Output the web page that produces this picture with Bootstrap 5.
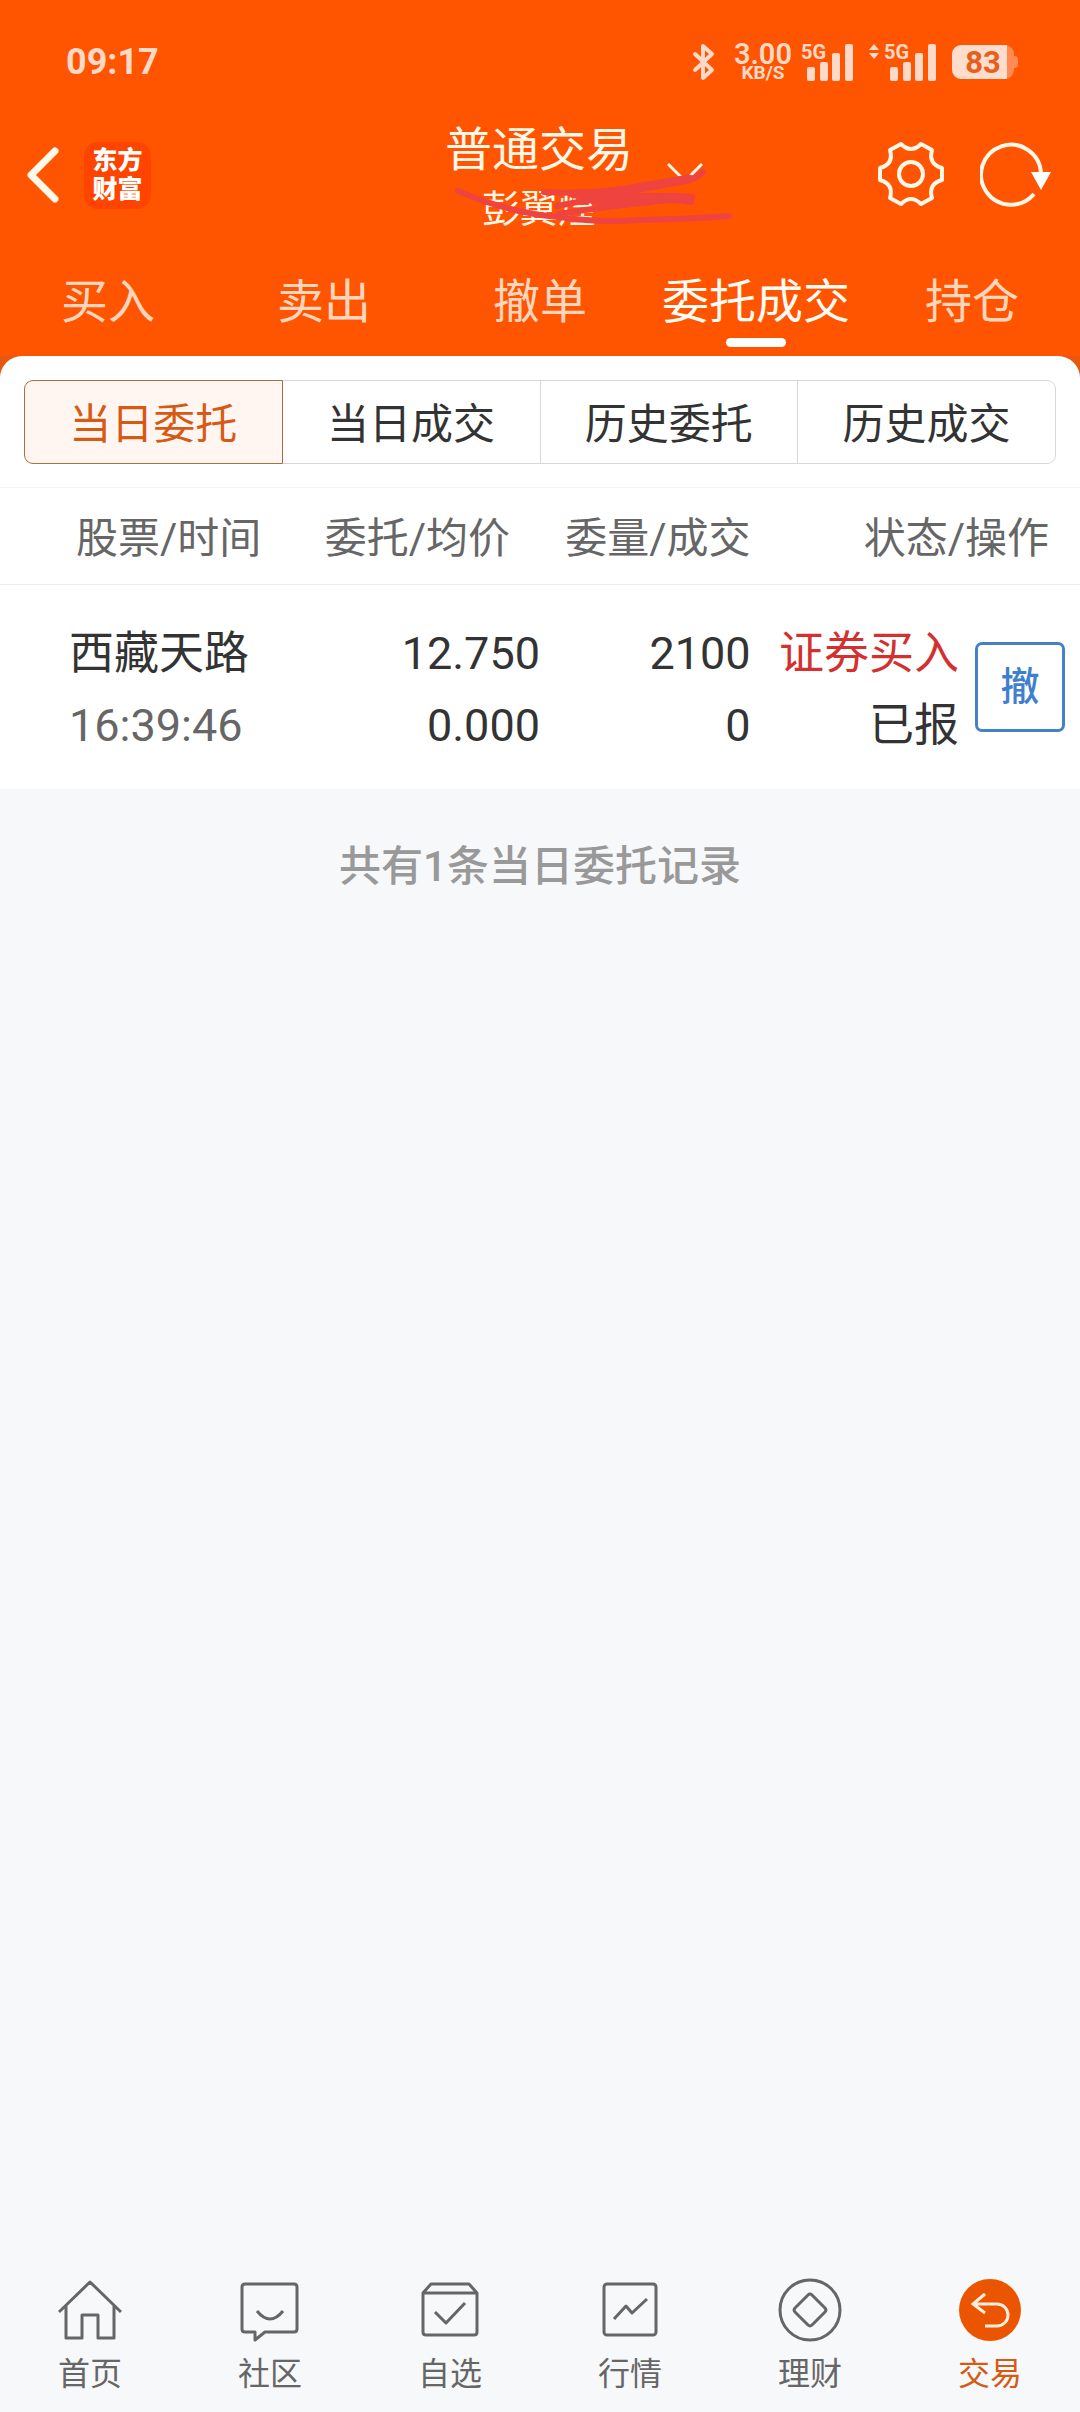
<!DOCTYPE html>
<html lang="zh-CN" data-bs-theme="light">
<head>
<meta charset="utf-8">
<meta name="viewport" content="width=device-width, initial-scale=1">
<title>普通交易</title>
<link href="https://cdn.jsdelivr.net/npm/bootstrap@5.3.0/dist/css/bootstrap.min.css" rel="stylesheet">
<style>
  body { background: #f7f8fa; color: #333; font-family: Roboto, "Noto Sans CJK SC", sans-serif; font-size: 42px; line-height: 60px; }
  .app-header { background: #ff5500; color: #fff8e8; }
  .app-header a, .app-header button { color: inherit; }

  /* status bar */
  .status-bar { height: 112px; padding: 12px 62px 0 66px; color: #ffd9c7; font-weight: 600; }
  .status-bar svg { overflow: visible; }
  .clock { font-size: 36px; font-weight: 700; }
  .net-speed { font-size: 29px; line-height: 22px; width: 58px; margin: 0 9px 0 19px; }
  .net-speed small { font-size: 19px; line-height: 16px; font-weight: 700; }

  /* title row */
  .title-bar { display: grid; grid-template-columns: 1fr auto 1fr; height: 126px; padding: 0 28px 0 26px; }
  .app-logo { width: 67px; height: 67px; border-radius: 14px; background: #ff4400; color: #fff; font-size: 25px; line-height: 29px; font-weight: 900; margin-left: 24px; }
  .account { padding-top: 8px; }
  .account-name { font-size: 47px; line-height: 60px; }
  .account-owner { font-size: 38px; line-height: 58px; }
  .scribble { left: 4px; top: 53px; pointer-events: none; }
  .chevron { margin: 0 0 4px 34px; }
  .tools { gap: 34px; }

  /* trade tabs */
  .trade-tabs .nav-link { padding: 34px 0 9px; font-size: 47px; line-height: 60px; color: #ffd6bd; border-radius: 0; }
  .trade-tabs .nav-link::after { content: ""; display: block; width: 60px; height: 9px; margin: 6px auto 0; border-radius: 5px; }
  .trade-tabs .nav-link.active { color: #fffcf5; background: none; }
  .trade-tabs .nav-link.active::after { background: #fff; }

  /* order panel */
  .panel-back { background: #e5580d; }
  .panel { border-radius: 22px 22px 0 0; }
  .seg { padding: 24px 24px 23px; }
  .seg .btn { --bs-btn-color: #333; --bs-btn-border-color: #d5d7d9; --bs-btn-font-size: 42px; --bs-btn-line-height: 60px; --bs-btn-border-radius: 9px; padding: 14px 0 8px;
    --bs-btn-active-bg: #fff6f2; --bs-btn-active-color: #d65a14; --bs-btn-active-border-color: #b06c45; }
  .orders { --bs-table-color: #333; --bs-table-bg: transparent; table-layout: fixed; border-top: 1px solid #f4f4f5; }
  .orders > :not(caption) > * > * { border: 0; }
  .orders th, .orders td { padding: 0; }
  .orders thead tr { border-bottom: 1px solid #ececee; }
  .orders thead th { color: #666; font-weight: 400; padding-top: 21px; padding-bottom: 15px; }
  .orders tbody td { font-size: 45px; line-height: 72px; padding-top: 33px; padding-bottom: 27px; white-space: nowrap; }
  .orders .head-stock { padding-left: 76px; }
  .orders .head-price { padding-right: 30px; }
  .orders .head-state { padding-right: 31px; }
  .orders .cell-stock { padding-left: 69px; }
  .orders tbody .cell-action { padding: 0 15px 0 0; }
  .orders .muted-time { color: #666; }
  .orders .buy { color: #d3302f; }
  .btn-cancel { width: 90px; height: 90px; border: 3px solid #4482c8; border-radius: 7px; color: #3f7fcf; font-size: 39px; line-height: 60px; font-weight: 500; }
  .record-count { color: #999; font-weight: 500; padding-top: 48px; }

  /* bottom navigation */
  .bottom-nav a { color: #666; font-size: 32px; line-height: 44px; gap: 10px; padding-bottom: 16px; }
  .bottom-nav a.current { color: #d65a14; }
  .line-icon { fill: none; stroke: currentColor; stroke-width: 3; stroke-linejoin: round; }
</style>
<script src="https://cdn.jsdelivr.net/npm/bootstrap@5.3.0/dist/js/bootstrap.bundle.min.js"></script>
</head>
<body class="d-flex flex-column min-vh-100">

<header class="app-header">
  <div class="status-bar d-flex align-items-center">
    <span class="clock me-auto">09:17</span>
    <svg width="22" height="38" viewBox="0 0 22 38" fill="none" stroke="currentColor" stroke-width="4" stroke-linejoin="round" stroke-linecap="round"><path d="M2 11 19 27 10 35V3L19 11 2 27"/></svg>
    <div class="net-speed text-center">3.00<small class="d-block">KB/S</small></div>
    <svg width="52" height="38" viewBox="0 0 52 38" fill="currentColor"><text x="0" y="16" font-size="20" font-weight="700">5G</text><rect x="6" y="24" width="8" height="14" rx="2"/><rect x="19" y="19" width="8" height="19" rx="2"/><rect x="31" y="10" width="8" height="28" rx="2"/><rect x="44" y="1" width="8" height="37" rx="2"/></svg>
    <svg class="ms-3" width="67" height="38" viewBox="0 0 67 38" fill="currentColor"><path d="M0 7 5 1l5 6zM0 10h10l-5 6z"/><text x="15" y="16" font-size="20" font-weight="700">5G</text><rect x="21" y="24" width="8" height="14" rx="2"/><rect x="34" y="19" width="8" height="19" rx="2"/><rect x="46" y="10" width="8" height="28" rx="2"/><rect x="59" y="1" width="8" height="37" rx="2"/></svg>
    <svg class="ms-3" width="66" height="34" viewBox="0 0 66 34"><path d="M9 0H53a9 9 0 0 1 9 9v2q4 0 4 3v6q0 3-4 3v2a9 9 0 0 1-9 9H9z" fill="#ff8a52"/><path d="M9 0H55V34H9a9 9 0 0 1-9-9V9a9 9 0 0 1 9-9z" fill="#ffdccb"/><text x="31" y="28" text-anchor="middle" font-size="31" font-weight="700" fill="#e5601c">83</text></svg>
  </div>

  <div class="title-bar align-items-center">
    <div class="d-flex align-items-center">
      <button type="button" class="btn p-0 border-0 d-flex" aria-label="返回"><svg width="34" height="58" viewBox="0 0 34 58" fill="none" stroke="currentColor" stroke-width="7" stroke-linecap="round" stroke-linejoin="round"><path d="M29 5 5 29 29 53"/></svg></button>
      <a href="#" class="app-logo d-flex flex-column justify-content-center text-center text-decoration-none text-white"><span>东方</span><span>财富</span></a>
    </div>
    <div class="account text-center position-relative">
      <div class="account-name">普通交易</div>
      <div class="account-owner">彭翼煌</div>
      <svg class="scribble position-absolute z-1" width="290" height="65" viewBox="0 0 290 65" fill="none" stroke="#ef4340" stroke-width="6" stroke-linecap="round" stroke-linejoin="round">
        <path d="M9 26Q60 48 110 52 150 58 190 55 240 54 280 51"/>
        <path d="M95 27Q150 30 190 21 225 17 246 13L254 7"/>
        <path d="M125 29Q160 29 195 22L240 14" stroke-width="9"/>
        <path d="M108 41Q150 32 190 31T243 32L242 37Q220 33 195 38 160 41 110 49"/>
        <path d="M145 36Q190 33 238 33" stroke-width="8"/>
      </svg>
    </div>
    <div class="d-flex align-items-center justify-content-between">
      <button type="button" class="btn p-0 border-0 d-flex chevron" aria-label="切换账户"><svg width="36" height="22" viewBox="0 0 36 22" fill="none" stroke="currentColor" stroke-width="3"><path d="M1 2 18 19 35 2"/></svg></button>
      <div class="tools d-flex align-items-center">
        <button type="button" class="btn p-0 border-0 d-flex" aria-label="设置"><svg width="68" height="68" viewBox="-33 -33 68 68" fill="none" stroke="currentColor" stroke-width="4" stroke-linejoin="round"><path d="M31-6V6Q17 10 21 24L10 30Q0 20-10 30L-21 24Q-17 10-31 6V-6Q-17-10-21-24L-10-30Q0-20 10-30L21-24Q17-10 31-6Z"/><circle r="12"/></svg></button>
        <button type="button" class="btn p-0 border-0 d-flex" aria-label="刷新"><svg width="72" height="68" viewBox="0 0 72 68" fill="none" stroke="currentColor" stroke-width="4"><path d="M61 32A30 30 0 1 0 54 53"/><path d="M51 31h20L61 49z" fill="#fff" stroke="none"/></svg></button>
      </div>
    </div>
  </div>

  <nav class="trade-tabs nav nav-pills nav-justified flex-nowrap">
    <a class="nav-link w-100" href="#">买入</a>
    <a class="nav-link w-100" href="#">卖出</a>
    <a class="nav-link w-100" href="#">撤单</a>
    <a class="nav-link w-100 active" aria-current="page" href="#">委托成交</a>
    <a class="nav-link w-100" href="#">持仓</a>
  </nav>
</header>

<main>
  <div class="panel-back">
    <section class="panel bg-white">
      <div class="seg">
        <div class="btn-group w-100" role="group" aria-label="委托类型">
          <button type="button" class="btn w-100 active" aria-pressed="true">当日委托</button>
          <button type="button" class="btn w-100">当日成交</button>
          <button type="button" class="btn w-100">历史委托</button>
          <button type="button" class="btn w-100">历史成交</button>
        </div>
      </div>
      <table class="table orders mb-0">
        <colgroup><col style="width:27.800%"><col style="width:22.200%"><col style="width:19.500%"><col style="width:19.300%"><col></colgroup>
        <thead>
          <tr>
            <th scope="col" class="head-stock">股票/时间</th>
            <th scope="col" class="head-price text-end">委托/均价</th>
            <th scope="col" class="text-end">委量/成交</th>
            <th scope="col" colspan="2" class="head-state text-end">状态/操作</th>
          </tr>
        </thead>
        <tbody>
          <tr>
            <td class="cell-stock">西藏天路<div class="muted-time">16:39:46</div></td>
            <td class="text-end">12.750<div>0.000</div></td>
            <td class="text-end">2100<div>0</div></td>
            <td class="text-end"><span class="buy">证券买入</span><div>已报</div></td>
            <td class="cell-action align-middle"><button type="button" class="btn btn-cancel d-block ms-auto p-0">撤</button></td>
          </tr>
        </tbody>
      </table>
    </section>
  </div>
  <p class="record-count text-center mb-0">共有1条当日委托记录</p>
</main>

<nav class="bottom-nav d-flex mt-auto">
  <a href="#" class="w-100 d-flex flex-column align-items-center text-decoration-none"><svg class="line-icon" width="64" height="64"><path d="M1 34 32 4 63 34M8 28V60H24V37H40V60H56V28"/></svg>首页</a>
  <a href="#" class="w-100 d-flex flex-column align-items-center text-decoration-none"><svg class="line-icon" width="64" height="64"><path d="M7 6H56q3 0 3 3V51q0 3-3 3H27L17 62V54H7q-3 0-3-3V9q0-3 3-3zM19 33q13 16 26 0"/></svg>社区</a>
  <a href="#" class="w-100 d-flex flex-column align-items-center text-decoration-none"><svg class="line-icon" width="64" height="64"><path d="M5 15 13 6H51L59 15V54q0 3-3 3H8q-3 0-3-3zH59M17 34 28 45 47 25"/></svg>自选</a>
  <a href="#" class="w-100 d-flex flex-column align-items-center text-decoration-none"><svg class="line-icon" width="64" height="64"><rect x="6" y="6" width="52" height="51" rx="3"/><path d="M16 41 28 28 34 35 49 21"/></svg>行情</a>
  <a href="#" class="w-100 d-flex flex-column align-items-center text-decoration-none"><svg class="line-icon" width="64" height="64"><circle cx="32" cy="32" r="30"/><path d="M30 17q2-2 4 0L47 30q2 2 0 4L34 47q-2 2-4 0L17 34q-2-2 0-4z"/></svg>理财</a>
  <a href="#" aria-current="page" class="current w-100 d-flex flex-column align-items-center text-decoration-none"><svg width="64" height="64" fill="none" stroke="#ffeedd" stroke-width="3"><circle cx="32" cy="32" r="31" fill="#ec5500" stroke="none"/><path d="M27 16 15 26 27 35M15 26H39a11 11 0 0 1 0 22H27"/></svg>交易</a>
</nav>

</body>
</html>
